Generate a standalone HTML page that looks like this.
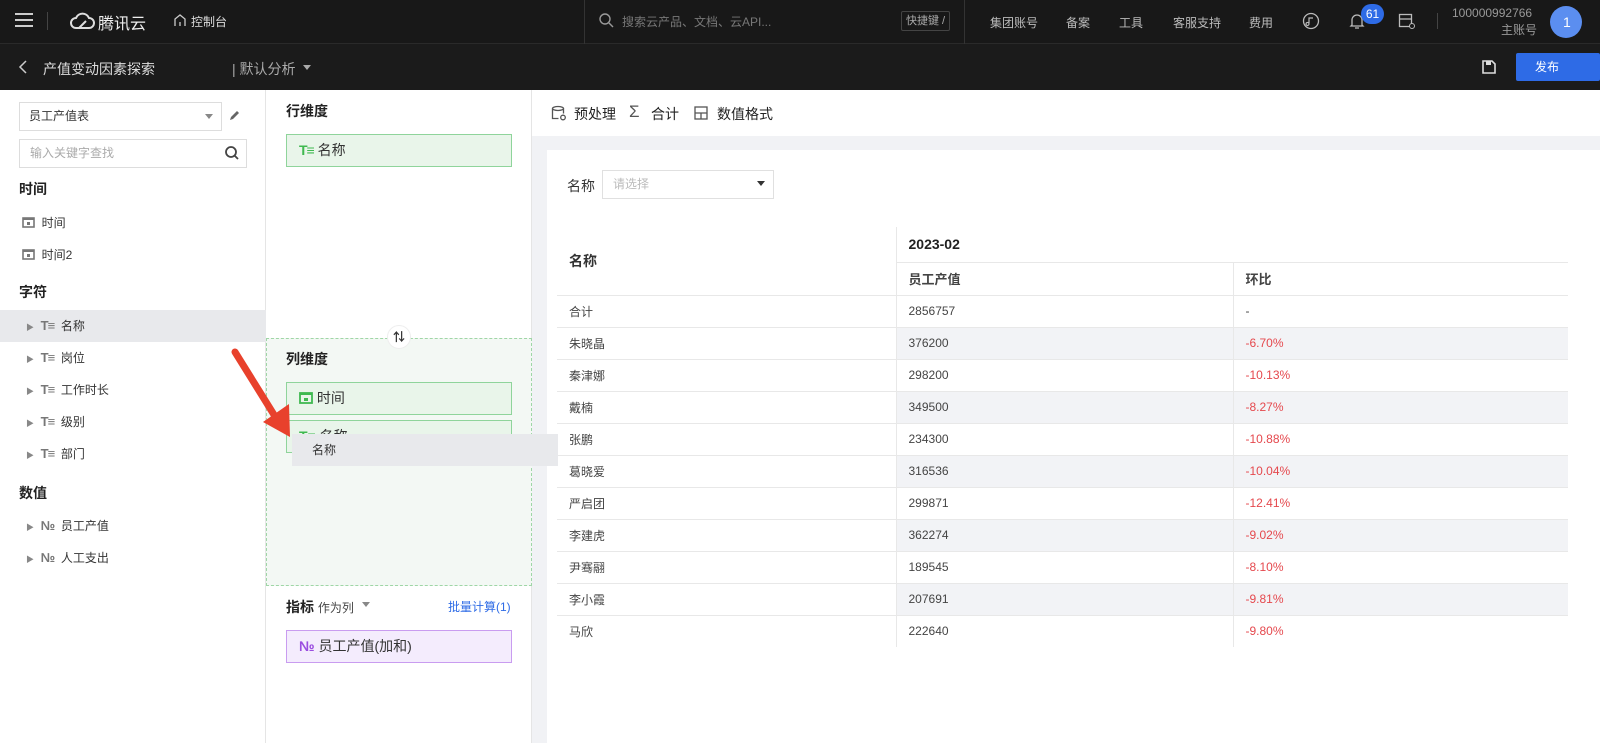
<!DOCTYPE html>
<html><head><meta charset="utf-8"><style>
*{box-sizing:border-box;margin:0;padding:0}
body{width:1600px;height:743px;overflow:hidden;font-family:"Liberation Sans","Noto Sans CJK SC",sans-serif;font-size:12px;color:#333;background:#fff;position:relative}
.abs{position:absolute}
.top{left:0;top:0;width:1600px;height:44px;background:#181818;border-bottom:1px solid #2a2a2a;color:#ccc}
.sub{left:0;top:44px;width:1600px;height:46px;background:#1b1b1b;color:#ddd}
.t{position:absolute;white-space:nowrap}
.side{left:0;top:90px;width:266px;height:653px;background:#fff;border-right:1px solid #e5e5e5}
.mid{left:266px;top:90px;width:266px;height:653px;background:#fff;border-right:1px solid #e5e5e5}
.right{left:532px;top:90px;width:1068px;height:653px;background:#f1f2f5}
.box{position:absolute;border:1px solid #ddd;background:#fff}
.item{position:absolute;left:0;width:266px;height:32px;line-height:32px;font-size:12px;color:#333}
.te{display:inline-block;font-weight:bold;color:#777;font-size:13px;letter-spacing:-1px}
.sec{position:absolute;left:19px;font-weight:bold;font-size:14px;color:#222}
.chip{position:absolute;left:20px;width:226px;height:33px;border:1px solid #8fd49b;background:#e9f5ea;line-height:31px;padding-left:12px;font-size:14px;color:#333}
table{border-collapse:collapse;position:absolute;left:557px;top:227px;width:1011px;font-size:12px}
td{height:32px;border-bottom:1px solid #e8e8e8;padding-left:12px;color:#444}
td.v{border-left:1px solid #e8e8e8}
tr.g td.v{background:#f2f3f6}
.r{color:#e5484d}
</style></head><body>
<div class="abs top">
 <div class="t" style="left:15px;top:13px;width:18px;height:2px;background:#ccc;box-shadow:0 6px 0 #ccc,0 12px 0 #ccc"></div>
 <div class="t" style="left:47px;top:12px;width:1px;height:18px;background:#444"></div>
 <svg class="t" style="left:70px;top:11px" width="26" height="20" viewBox="0 0 26 20"><path d="M6 17a5 5 0 0 1 0-10a7 7 0 0 1 13 0a5 5 0 0 1 0 10z M9 17l7-7" fill="none" stroke="#ddd" stroke-width="2"/></svg>
 <div class="t" style="left:98px;top:10px;font-size:16px;color:#eee">腾讯云</div>
 <svg class="t" style="left:173px;top:13px" width="14" height="14" viewBox="0 0 14 14"><path d="M2 13V6l5-4 5 4v7" fill="none" stroke="#ccc" stroke-width="1.3"/><path d="M7 13V9" stroke="#ccc" stroke-width="1.3"/></svg>
 <div class="t" style="left:191px;top:13px;font-size:12px;color:#ddd">控制台</div>
 <div class="t" style="left:584px;top:0;width:1px;height:44px;background:#333"></div>
 <svg class="t" style="left:598px;top:12px" width="16" height="16"><circle cx="7" cy="7" r="5" fill="none" stroke="#999" stroke-width="1.4"/><path d="M11 11l4 4" stroke="#999" stroke-width="1.4"/></svg>
 <div class="t" style="left:622px;top:13px;color:#777">搜索云产品、文档、云API...</div>
 <div class="t" style="left:901px;top:11px;height:20px;border:1px solid #444;border-radius:2px;padding:0 4px;line-height:18px;font-size:11px;color:#aaa">快捷键 /</div>
 <div class="t" style="left:964px;top:0;width:1px;height:44px;background:#333"></div>
 <div class="t" style="left:990px;top:14px;color:#bbb">集团账号</div>
 <div class="t" style="left:1066px;top:14px;color:#bbb">备案</div>
 <div class="t" style="left:1119px;top:14px;color:#bbb">工具</div>
 <div class="t" style="left:1173px;top:14px;color:#bbb">客服支持</div>
 <div class="t" style="left:1249px;top:14px;color:#bbb">费用</div>
 <svg class="t" style="left:1302px;top:12px" width="18" height="18"><circle cx="9" cy="9" r="7.5" fill="none" stroke="#bbb" stroke-width="1.3"/><path d="M7 12a1.5 1.5 0 1 1 0-.1V6h4" fill="none" stroke="#bbb" stroke-width="1.2"/></svg>
 <svg class="t" style="left:1349px;top:12px" width="16" height="18"><path d="M3 13V8a5 5 0 0 1 10 0v5l1 1H2z M6 16h4" fill="none" stroke="#bbb" stroke-width="1.3"/></svg>
 <div class="t" style="left:1361px;top:4px;width:23px;height:20px;border-radius:10px;background:#2e6be6;color:#fff;font-size:12px;text-align:center;line-height:20px">61</div>
 <svg class="t" style="left:1398px;top:12px" width="18" height="18"><rect x="1.5" y="2.5" width="12" height="12" fill="none" stroke="#bbb" stroke-width="1.3"/><path d="M1.5 7h12" stroke="#bbb" stroke-width="1.3"/><circle cx="14" cy="14" r="2.5" fill="#181818" stroke="#bbb"/></svg>
 <div class="t" style="left:1437px;top:13px;width:1px;height:16px;background:#444"></div>
 <div class="t" style="left:1452px;top:6px;color:#999;font-size:12px">100000992766</div>
 <div class="t" style="left:1501px;top:21px;color:#999;font-size:12px">主账号</div>
 <div class="t" style="left:1550px;top:6px;width:32px;height:32px;border-radius:16px;background:#5b8ef0;color:#fff;line-height:32px;padding-left:13px;font-size:14px">1</div>
</div>
<div class="abs sub">
 <svg class="t" style="left:18px;top:16px" width="10" height="14"><path d="M8 1L2 7l6 6" fill="none" stroke="#ccc" stroke-width="1.5"/></svg>
 <div class="t" style="left:43px;top:15px;font-size:14px;color:#ddd">产值变动因素探索</div>
 <div class="t" style="left:232px;top:15px;font-size:14px;color:#aaa">| 默认分析</div>
 <div class="t" style="left:303px;top:21px;border:4px solid transparent;border-top:5px solid #aaa"></div>
 <svg class="t" style="left:1481px;top:15px" width="16" height="16"><path d="M2 2h9l3 3v9H2z" fill="none" stroke="#ddd" stroke-width="1.6"/><rect x="5" y="2" width="5" height="4" fill="#ddd"/></svg>
 <div class="t" style="left:1516px;top:9px;width:84px;height:28px;background:#2e6be6;border-radius:2px;color:#fff;line-height:28px;padding-left:19px;font-size:12px">发布</div>
</div>
<div class="abs side">
 <div class="box" style="left:19px;top:12px;width:203px;height:29px;line-height:27px;padding-left:9px">员工产值表</div>
 <div class="t" style="left:205px;top:24px;border:4px solid transparent;border-top:5px solid #888"></div>
 <svg class="t" style="left:228px;top:18px" width="14" height="14"><path d="M2 12l1-3 6-6 2 2-6 6z" fill="#666"/></svg>
 <div class="box" style="left:19px;top:49px;width:228px;height:29px;line-height:27px;padding-left:10px;color:#aaa">输入关键字查找</div>
 <svg class="t" style="left:224px;top:55px" width="16" height="16"><circle cx="7" cy="7" r="5" fill="none" stroke="#444" stroke-width="1.8"/><path d="M11 11l3 3" stroke="#444" stroke-width="1.8"/></svg>
 <div class="sec" style="top:89px">时间</div>
 <div class="item" style="top:117px;padding-left:22px"><svg width="13" height="12" style="vertical-align:-1px"><rect x="1" y="2" width="11" height="9" fill="none" stroke="#777" stroke-width="1.6"/><rect x="1" y="2" width="11" height="2" fill="#777"/><rect x="5" y="6" width="3" height="3" fill="#777"/></svg> &nbsp;时间</div>
 <div class="item" style="top:149px;padding-left:22px"><svg width="13" height="12" style="vertical-align:-1px"><rect x="1" y="2" width="11" height="9" fill="none" stroke="#777" stroke-width="1.6"/><rect x="1" y="2" width="11" height="2" fill="#777"/><rect x="5" y="6" width="3" height="3" fill="#777"/></svg> &nbsp;时间2</div>
 <div class="sec" style="top:192px">字符</div>
 <div class="item" style="top:220px;background:#e8e9ec;padding-left:26px"><span style="font-size:8px;color:#888">▶</span> &nbsp;<span class="te">T≡</span> &nbsp;名称</div>
 <div class="item" style="top:252px;padding-left:26px"><span style="font-size:8px;color:#888">▶</span> &nbsp;<span class="te">T≡</span> &nbsp;岗位</div>
 <div class="item" style="top:284px;padding-left:26px"><span style="font-size:8px;color:#888">▶</span> &nbsp;<span class="te">T≡</span> &nbsp;工作时长</div>
 <div class="item" style="top:316px;padding-left:26px"><span style="font-size:8px;color:#888">▶</span> &nbsp;<span class="te">T≡</span> &nbsp;级别</div>
 <div class="item" style="top:348px;padding-left:26px"><span style="font-size:8px;color:#888">▶</span> &nbsp;<span class="te">T≡</span> &nbsp;部门</div>
 <div class="sec" style="top:393px">数值</div>
 <div class="item" style="top:420px;padding-left:26px"><span style="font-size:8px;color:#888">▶</span> &nbsp;<span class="te">№</span> &nbsp;员工产值</div>
 <div class="item" style="top:452px;padding-left:26px"><span style="font-size:8px;color:#888">▶</span> &nbsp;<span class="te">№</span> &nbsp;人工支出</div>
</div>
<div class="abs mid">
 <div class="t" style="left:20px;top:11px;font-size:14px;font-weight:bold;color:#222">行维度</div>
 <div class="chip" style="top:44px"><span style="color:#3fb950;font-weight:bold;letter-spacing:-1px">T≡</span> 名称</div>
 <div class="t" style="left:0;top:248px;width:266px;height:248px;border:1px dashed #9fd6a6;background:#f3f8f4"></div>
 <div class="t" style="left:121px;top:235px;width:24px;height:24px;border-radius:12px;background:#fff;border:1px solid #eee;text-align:center;line-height:22px;font-weight:bold;font-size:12px">⇅</div>
 <div class="t" style="left:20px;top:259px;font-size:14px;font-weight:bold;color:#222">列维度</div>
 <div class="chip" style="top:292px"><svg width="14" height="13" style="vertical-align:-1px"><rect x="1" y="2" width="12" height="10" fill="none" stroke="#3fb950" stroke-width="1.8"/><rect x="1" y="2" width="12" height="2" fill="#3fb950"/><rect x="5" y="7" width="4" height="3" fill="#3fb950"/></svg> 时间</div>
 <div class="chip" style="top:330px"><span style="color:#3fb950;font-weight:bold">T≡</span> 名称</div>
 <div class="t" style="left:20px;top:507px;font-size:14px;font-weight:bold;color:#222">指标 <span style="font-weight:normal;font-size:12px;color:#444">作为列</span></div>
 <div class="t" style="left:96px;top:512px;border:4px solid transparent;border-top:5px solid #888"></div>
 <div class="t" style="left:182px;top:508px;color:#2e6be6;font-size:12px">批量计算(1)</div>
 <div class="chip" style="top:540px;border-color:#c99cf0;background:#f4ecfd"><span style="color:#9b4de0;font-weight:bold">№</span> 员工产值(加和)</div>
</div>
<div class="abs right">
 <div class="t" style="left:0;top:0;width:1068px;height:46px;background:#fff"></div>
 <svg class="t" style="left:19px;top:15px" width="16" height="16"><ellipse cx="7" cy="3.5" rx="5.5" ry="2" fill="none" stroke="#555" stroke-width="1.3"/><path d="M1.5 3.5v10h6M12.5 3.5v5" fill="none" stroke="#555" stroke-width="1.3"/><circle cx="12" cy="12.5" r="2.3" fill="none" stroke="#555" stroke-width="1.3"/></svg>
 <div class="t" style="left:42px;top:14px;font-size:14px;color:#222">预处理</div>
 <div class="t" style="left:97px;top:12px;font-size:17px;color:#555">Σ</div>
 <div class="t" style="left:119px;top:14px;font-size:14px;color:#222">合计</div>
 <svg class="t" style="left:162px;top:16px" width="14" height="14"><rect x="1" y="1" width="12" height="12" fill="none" stroke="#555" stroke-width="1.3"/><path d="M1 7h12M7 7v6" stroke="#555" stroke-width="1.3"/></svg>
 <div class="t" style="left:185px;top:14px;font-size:14px;color:#222">数值格式</div>
 <div class="t" style="left:15px;top:60px;width:1053px;height:593px;background:#fff"></div>
 <div class="t" style="left:35px;top:86px;font-size:14px;color:#333">名称</div>
 <div class="box" style="left:70px;top:80px;width:172px;height:29px;line-height:27px;padding-left:10px;color:#bbb;border-color:#e0e0e0">请选择</div>
 <div class="t" style="left:225px;top:91px;border:4px solid transparent;border-top:5px solid #333"></div>
</div>
<div class="abs" style="left:292px;top:434px;width:266px;height:32px;background:#e8e9ec;line-height:32px;padding-left:20px;font-size:12px;color:#333;z-index:5">名称</div>
<svg class="abs" style="left:0;top:0;z-index:6" width="1600" height="743"><path d="M235 352L276 418" stroke="#e8412c" stroke-width="7" stroke-linecap="round"/><path d="M263 422L290 437L289 404z" fill="#e8412c"/></svg>
<table>
<tr><td rowspan="2" style="font-weight:bold;font-size:14px;color:#333;width:339px;height:68px">名称</td><td colspan="2" class="v" style="font-weight:bold;font-size:14px;color:#222;height:35px">2023-02</td></tr>
<tr><td class="v" style="font-weight:bold;font-size:13px;width:337px;height:33px">员工产值</td><td class="v" style="font-weight:bold;font-size:13px">环比</td></tr>
<tr><td>合计</td><td class="v">2856757</td><td class="v">-</td></tr>
<tr class="g"><td>朱晓晶</td><td class="v">376200</td><td class="v r">-6.70%</td></tr>
<tr><td>秦津娜</td><td class="v">298200</td><td class="v r">-10.13%</td></tr>
<tr class="g"><td>戴楠</td><td class="v">349500</td><td class="v r">-8.27%</td></tr>
<tr><td>张鹏</td><td class="v">234300</td><td class="v r">-10.88%</td></tr>
<tr class="g"><td>葛晓爱</td><td class="v">316536</td><td class="v r">-10.04%</td></tr>
<tr><td>严启团</td><td class="v">299871</td><td class="v r">-12.41%</td></tr>
<tr class="g"><td>李建虎</td><td class="v">362274</td><td class="v r">-9.02%</td></tr>
<tr><td>尹骞翮</td><td class="v">189545</td><td class="v r">-8.10%</td></tr>
<tr class="g"><td>李小霞</td><td class="v">207691</td><td class="v r">-9.81%</td></tr>
<tr><td style="border:none">马欣</td><td class="v" style="border-bottom:none">222640</td><td class="v r" style="border-bottom:none">-9.80%</td></tr>
</table>
</body></html>
